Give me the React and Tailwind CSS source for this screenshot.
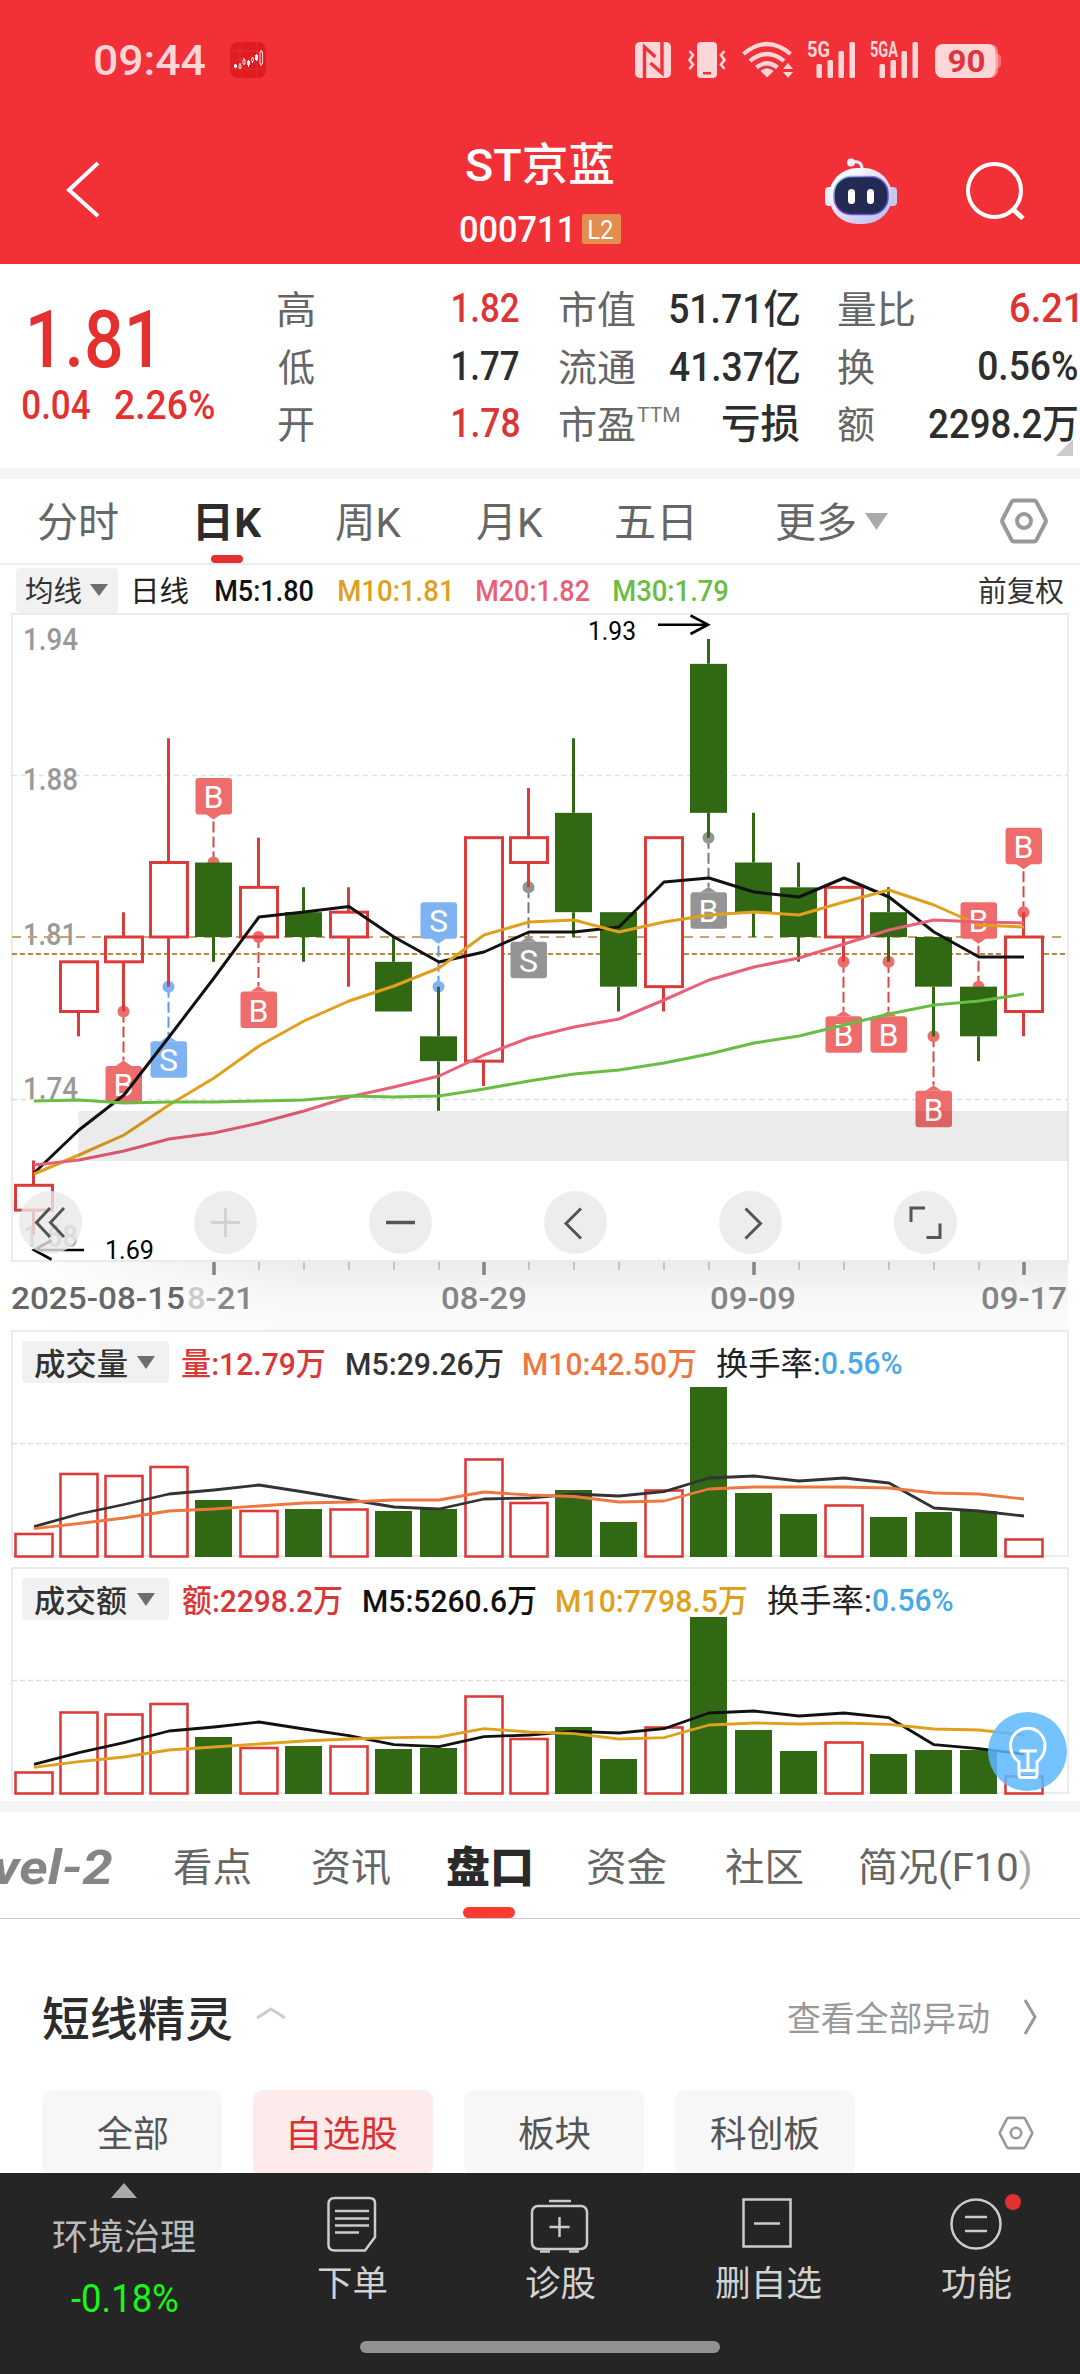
import React, { useLayoutEffect, useRef, useState } from "react";

function T({ w, className = "", children }) {
  const ref = useRef(null);
  const [fit, setFit] = useState(null);
  useLayoutEffect(() => {
    const cs = getComputedStyle(ref.current);
    const ctx = document.createElement("canvas").getContext("2d");
    ctx.font = `${cs.fontStyle} ${cs.fontWeight} ${cs.fontSize} ${cs.fontFamily}`;
    const text = ref.current.textContent;
    const m = ctx.measureText(text);
    const ink = m.actualBoundingBoxLeft + m.actualBoundingBoxRight;
    const s = ink > 0 ? w / ink : 1;
    const dy = /[\u4e00-\u9fff]/.test(text) ? 1.5 : 0.5;
    setFit({ transform: `translate(${m.actualBoundingBoxLeft * s}px, ${dy}px) scaleX(${s})` });
  }, [w]);
  return (
    <span className={`block shrink-0 whitespace-nowrap leading-none ${className}`} style={{ width: w }}>
      <span ref={ref} className="inline-block origin-left" style={fit || undefined}>{children}</span>
    </span>
  );
}

const X = (k) => 33.5 + 45 * k;
const Y = (c) => 937 - 24.83 * (c - 181);
const RED = "#dc3b3b";
const GREEN = "#306813";

// [up, bodyTop, bodyBottom, high, low] in cents
const candles = [
  [1, 171, 170, 172, 169], [1, 180, 178, 180, 177], [1, 181, 180, 182, 178], [1, 184, 181, 189, 179],
  [0, 184, 181, 184, 180], [1, 183, 181, 185, 181], [0, 182, 181, 183, 180], [1, 182, 181, 183, 179],
  [0, 180, 178, 181, 178], [0, 177, 176, 179, 174], [1, 185, 176, 185, 175], [1, 185, 184, 187, 183],
  [0, 186, 182, 189, 181], [0, 182, 179, 182, 178], [1, 185, 179, 185, 178], [0, 192, 186, 193, 185],
  [0, 184, 182, 186, 181], [0, 183, 181, 184, 180], [1, 183, 181, 183, 180], [0, 182, 181, 183, 180],
  [0, 181, 179, 181, 177], [0, 179, 177, 179, 176], [1, 181, 178, 182, 177],
];

// [index, letter, colour, price, above]
const R = "#ee6c6c", B = "#7fb2f2", G = "#949494";
const markers = [
  [2, "B", R, 178, 0], [3, "S", B, 179, 0], [4, "B", R, 184, 1], [5, "B", R, 181, 0], [9, "S", B, 179, 1],
  [11, "S", G, 183, 0], [15, "B", G, 185, 0], [18, "B", R, 180, 0], [19, "B", R, 180, 0], [20, "B", R, 177, 0],
  [21, "B", R, 179, 1], [22, "B", R, 182, 1],
];
const stemColor = { [R]: "#d94848", [B]: "#5f9be6", [G]: "#777" };

const ma5 = [1173, 1130, 1095, 1037, 978, 917, 912, 906.5, 937, 962, 952, 932, 932, 927, 882, 878, 892, 897, 878, 897, 932, 957, 957];
const ma10 = [1174, 1155, 1135, 1105, 1078, 1046, 1021, 1001, 986, 968, 935, 922, 920, 932, 922, 915, 912, 915, 902, 890, 905, 925, 927];
const ma20 = [1165, 1160, 1151, 1139, 1133, 1123, 1111, 1097, 1087, 1076, 1055, 1038, 1027, 1019, 1000, 980, 967, 958, 944, 930, 920, 922, 923];
const ma30 = [1101, 1100, 1103, 1102, 1102, 1101, 1100, 1096, 1097, 1096, 1089, 1081, 1074, 1070, 1063, 1054, 1043, 1036, 1025, 1014, 1005, 1001, 994];

function Line({ ys, color, w = 3 }) {
  return <polyline fill="none" stroke={color} strokeWidth={w} strokeLinejoin="round" points={ys.map((y, k) => `${X(k) + 0.5},${y}`).join(" ")} />;
}

function Marker({ m: [k, letter, color, price, above] }) {
  const x = X(k), d = Y(price);
  const top = above ? d - 84.5 : d + 54.5;
  const tip = above ? d - 43 : d + 49;
  const base = above ? top + 36 : top;
  return (
    <g>
      <path d={`M${x} ${d}V${tip}`} stroke={stemColor[color]} strokeWidth="2" strokeDasharray="11 4" />
      <circle cx={x} cy={d} r="6" fill={color} />
      <rect x={x - 18} y={top} width="36.5" height="36.5" rx="3" fill={color} />
      <path d={`M${x - 8} ${base}L${x} ${tip}L${x + 8} ${base}Z`} fill={color} />
      <text x={x} y={top + 30} fill="#fff" fontSize="32" textAnchor="middle" fontFamily="Roboto, sans-serif">{letter}</text>
    </g>
  );
}

function Label({ x, y, w, children, size = 32, fill = "#999", weight = 500 }) {
  return <text x={x} y={y} fontSize={size} fill={fill} fontWeight={weight} textLength={w} lengthAdjust="spacingAndGlyphs" fontFamily="Roboto, sans-serif">{children}</text>;
}

function PriceChart() {
  return (
    <svg viewBox="0 613 1080 717" className="block h-[717px] w-[1080px]">
      <defs>
        <linearGradient id="shade" x1="0" y1="0" x2="0" y2="1">
          <stop offset="0" stopColor="#ececec" />
          <stop offset="0.5" stopColor="#f7f7f7" />
          <stop offset="1" stopColor="#fbfbfb" />
        </linearGradient>
        <linearGradient id="fade" x1="0" y1="0" x2="1" y2="0">
          <stop offset="0" stopColor="#fff" />
          <stop offset="1" stopColor="#fff" stopOpacity="0" />
        </linearGradient>
      </defs>
      <rect x="12" y="1262" width="1056" height="68" fill="url(#shade)" />
      <rect x="12" y="1262" width="290" height="68" fill="url(#fade)" />
      <rect x="12" y="614" width="1056" height="647" fill="#fff" stroke="#ebebeb" strokeWidth="2" />
      <path d="M12 775.5H1068M12 1099.5H1068" stroke="#e0e0e0" strokeWidth="1.3" strokeDasharray="5 4" />
      <Label x="23" y="650" w="55">1.94</Label>
      <Label x="23" y="790" w="55">1.88</Label>
      <Label x="23" y="945" w="54">1.81</Label>
      <Label x="23" y="1099" w="55">1.74</Label>
      <Label x="23" y="1247" w="55" fill="#aaa">1.68</Label>
      <path d="M12 937H1068" stroke="#c9a36a" strokeWidth="2" strokeDasharray="9 7" />
      <path d="M12 954H1068" stroke="#bd8a45" strokeWidth="2" strokeDasharray="5 3" />
      {markers.map((m) => <Marker key={m[0]} m={m} />)}
      {candles.map(([up, t, b, h, l], k) => {
        const x = X(k), c = up ? RED : GREEN;
        return (
          <g key={k}>
            <path d={`M${x} ${Y(h)}V${Y(t)}M${x} ${Y(b)}V${Y(l)}`} stroke={c} strokeWidth="3" />
            {up ? <rect x={x - 18} y={Y(t)} width="37" height={Y(b) - Y(t)} fill={k === 5 || k === 2 ? "none" : "#fff"} stroke={c} strokeWidth="3" />
              : <rect x={x - 18.5} y={Y(t)} width="37" height={Y(b) - Y(t)} fill={c} />}
          </g>
        );
      })}
      <Line ys={ma5} color="#111" />
      <Line ys={ma10} color="#e0a01c" />
      <Line ys={ma20} color="#e95f78" />
      <Line ys={ma30} color="#69bd43" />
      <rect x="78.5" y="1111" width="989.5" height="50" fill="#000" fillOpacity="0.08" />
      <path d="M658 624.7H708M690.5 615.5L708 624.7L690.5 634" fill="none" stroke="#000" strokeWidth="2.6" />
      <Label x="588" y="640" w="48" size="26" fill="#000" weight="400">1.93</Label>
      <path d="M84 1250H34M51.5 1240.5L34 1250L51.5 1259.5" fill="none" stroke="#000" strokeWidth="2.6" />
      <Label x="105" y="1259" w="49" size="26" fill="#000" weight="400">1.69</Label>
      {Array.from({ length: 19 }, (_, i) => i + 4).map((k) => {
        const major = (k - 4) % 6 === 0;
        return <path key={k} d={`M${X(k) + 0.5} 1262V${major ? 1275 : 1270}`} stroke={major ? "#858585" : "#c4c4c4"} strokeWidth={major ? 3.5 : 2} />;
      })}
      <Label x="11" y="1309" w="174" fill="#666" weight="500">2025-08-15</Label>
      <text x="187" y="1309" fontSize="32" fontWeight="500" fill="#888" textLength="67" lengthAdjust="spacingAndGlyphs" fontFamily="Roboto, sans-serif"><tspan fill="#ccc">8</tspan><tspan fill="#aaa">-</tspan>21</text>
      <Label x="441" y="1309" w="86" fill="#858585">08-29</Label>
      <Label x="710" y="1309" w="86" fill="#858585">09-09</Label>
      <Label x="981" y="1309" w="86" fill="#858585">09-17</Label>
    </svg>
  );
}

const toolIcons = [
  <><path d="M31 17L17.5 31.5L31 46M45 17L31.5 31.5L45 46" /></>,
  <g stroke="#d2d2d2"><path d="M17 31.5H46M31.5 17V46" /></g>,
  <><path d="M17 31.5H46" strokeWidth="3.5" /></>,
  <><path d="M37 17.5L22 32.5L37 47.5" /></>,
  <><path d="M26.5 17.5L41.5 32.5L26.5 47.5" /></>,
  <><path d="M17 31V17H31M46 32.5V46.5H32.5" /></>,
];

const volume = {
  tops: [1534, 1474, 1476, 1467, 1500, 1511, 1509, 1509.5, 1511, 1509, 1459.5, 1503, 1490, 1522, 1490.5, 1387, 1493, 1514, 1505.5, 1517, 1512, 1511, 1539.5],
  m5: [1526.7, 1514, 1504.5, 1494, 1490, 1485, 1492, 1499.5, 1507, 1509, 1499, 1498, 1494, 1496, 1491.7, 1478, 1476, 1481, 1478, 1483, 1508, 1511, 1516],
  m10: [1528.7, 1523.5, 1518, 1511, 1509, 1506, 1503, 1502, 1500, 1500, 1492, 1495, 1496.5, 1502, 1501, 1489, 1487, 1487, 1487, 1488, 1493, 1494, 1499],
};
const amount = {
  tops: [1772.5, 1712.5, 1714.5, 1704, 1737, 1748, 1746, 1746.5, 1749, 1748, 1696.5, 1739, 1727, 1759, 1727.5, 1617, 1730, 1751, 1742.5, 1754, 1750, 1750, 1776.5],
  m5: [1764.3, 1752.7, 1742.7, 1731, 1727, 1722, 1729, 1735.7, 1744.7, 1746.7, 1736.7, 1735, 1731.3, 1733, 1728.7, 1713, 1711, 1716, 1713, 1717.7, 1744.7, 1748.7, 1754],
  m10: [1767.3, 1761.7, 1757, 1750, 1747, 1744, 1741, 1739, 1737.7, 1737, 1728.7, 1732, 1733.7, 1739, 1737.7, 1725, 1723, 1724, 1723, 1724.3, 1729, 1730, 1735],
};

function BarPanel({ data, top, bottom, mid, c5, c10, box, className }) {
  return (
    <svg viewBox={box} className={className}>
      <rect x="12" y={top} width="1056" height={bottom - top - 1} fill="none" stroke="#ebebeb" strokeWidth="2" />
      <path d={`M12 ${mid}H1068`} stroke="#dedede" strokeWidth="1.3" strokeDasharray="5 3" />
      {data.tops.map((t, k) => candles[k][0]
        ? <rect key={k} x={X(k) - 18} y={t} width="37" height={bottom - t - 0.5} fill="#fff" stroke={RED} strokeWidth="2.6" />
        : <rect key={k} x={X(k) - 18.5} y={t} width="37" height={bottom - t} fill={GREEN} />)}
      <Line ys={data.m5} color={c5} w={2.8} />
      <Line ys={data.m10} color={c10} w={2.8} />
    </svg>
  );
}

function Picker({ label }) {
  return (
    <div className="ml-[22px] flex h-[42px] w-[147px] shrink-0 items-center rounded bg-[#f1f1f1]">
      <T w={93} className="ml-3 text-[31px] text-[#333]">{label}</T>
      <svg viewBox="0 0 18 13" className="ml-[10px] h-[13px] w-[18px]"><path d="M0 0H18L9 13Z" fill="#6e6e6e" /></svg>
    </div>
  );
}

function Hex({ size, color, w }) {
  return (
    <svg viewBox="0 0 48 46" className={size} fill="none" stroke={color} strokeWidth={w}>
      <path d="M14 2.5H34Q35.500 2.500 36.300 3.800L45.500 21.500Q46.200 23 45.500 24.500L36.300 42.200Q35.500 43.500 34 43.500H14Q12.500 43.500 11.700 42.200L2.500 24.500Q1.800 23 2.500 21.500L11.700 3.800Q12.500 2.500 14 2.500Z" />
      <circle cx="24" cy="23" r="7" />
    </svg>
  );
}

function StatusIcons() {
  const c = "#ffd6d8";
  return (
    <svg viewBox="635 38 370 44" className="ml-auto mr-[75px] h-[44px] w-[370px]" fill={c}>
      <rect x="635" y="42" width="36" height="36" rx="5" />
      <path d="M644.5 78V47L655.500 57M662 42V73L650.500 63" fill="none" stroke="#f23038" strokeWidth="3.4" />
      <rect x="697" y="42" width="20" height="36" rx="4" />
      <rect x="703" y="72" width="8" height="2.500" fill="#f23038" />
      <path d="M689.500 51L693 55L689.500 60L693 64.500L689.500 69M724.500 51L721 55L724.500 60L721 64.500L724.500 69" fill="none" stroke={c} strokeWidth="2.600" />
      <g fill="none" stroke={c} strokeWidth="4.200">
        <path d="M743.500 54Q767 34 790.500 54" />
        <path d="M750 61Q767 47 784 61" />
        <path d="M756.500 67.500Q767 59 777.500 67.500" />
      </g>
      <path d="M760.500 71Q767 65.500 773.500 71L767 77.500Z" />
      <path d="M783 69L788 63L793 69ZM783 72H793L788 78Z" />
      <text x="807" y="57" fontSize="21.500" fontWeight="700" textLength="23" lengthAdjust="spacingAndGlyphs" fontFamily="Roboto, sans-serif">5G</text>
      <text x="870" y="57" fontSize="21.500" fontWeight="700" textLength="28" lengthAdjust="spacingAndGlyphs" fontFamily="Roboto, sans-serif">5GA</text>
      {[0, 63].map((o) => (
        <g key={o}>
          <rect x={816.500 + o} y="64" width="5.500" height="14" rx="1.500" />
          <rect x={827.500 + o} y="60" width="5.500" height="18" rx="1.500" />
          <rect x={838.500 + o} y="51" width="5.500" height="27" rx="1.500" />
          <rect x={849.500 + o} y="42" width="5.500" height="36" rx="1.500" />
        </g>
      ))}
      <rect x="990" y="54" width="11" height="14" rx="4" opacity="0.400" />
      <rect x="940" y="44" width="58" height="34" rx="8" opacity="0.500" />
      <rect x="935" y="44" width="60.500" height="34" rx="8" />
      <text x="966.500" y="72" fill="#e0353c" fontSize="31" fontWeight="700" textAnchor="middle" textLength="38" lengthAdjust="spacingAndGlyphs" fontFamily="Roboto, sans-serif">90</text>
    </svg>
  );
}

function Header() {
  return (
    <header className="h-[264px] bg-[#f23038] text-white">
      <div className="flex h-[120px] items-center">
        <T w={110} className="ml-[95px] text-[42px] font-medium text-[#ffd6d8]">09:44</T>
        <svg viewBox="0 0 36 36" className="ml-[25px] h-9 w-9">
          <rect width="36" height="36" rx="8" fill="#e01c20" />
          <path d="M0 9H36M0 18H36M0 27H36M10 0V36M27 0V36" stroke="#e83a3a" strokeWidth="0.600" />
          <path d="M5.500 22V26M10 21V27M14 16V23M18.500 18V25M22.500 15V21M26.500 12V19M31 8V24" stroke="#fff" strokeWidth="1" />
          <path d="M4 22.500H7V25.500H4ZM17 19H20V23H17ZM25 13H28V18H25Z" fill="#fff" />
          <path d="M9 23H11V26H9ZM13 18H15V22H13ZM21.500 16H23.500V19H21.500ZM30 10H32.500V22H30Z" fill="#e01c20" stroke="#fff" strokeWidth="0.800" />
        </svg>
        <StatusIcons />
      </div>
      <div className="grid h-[144px] grid-cols-[1fr_auto_1fr]">
        <div className="flex items-center pb-[5px] pl-[65px]">
          <svg viewBox="0 0 36 60" className="h-[60px] w-9" fill="none" stroke="#fff" strokeWidth="4"><path d="M33 3L4 30L33 56" /></svg>
        </div>
        <div className="flex flex-col items-center pt-5">
          <div className="flex h-[46px] items-center"><T w={148} className="text-[45px] font-medium">ST京蓝</T></div>
          <div className="mt-[26px] flex h-[34px] items-center gap-3">
            <T w={110} className="text-[36px] font-medium">000711</T>
            <div className="flex h-[30px] w-[39px] items-center justify-center rounded-[2px] bg-[#e38e4c]"><T w={24} className="text-[26px]">L2</T></div>
          </div>
        </div>
        <div className="flex items-center justify-end pb-[3px] pr-[54px]">
          <svg viewBox="0 0 72 66" className="h-[66px] w-[72px]">
            <defs>
              <linearGradient id="head" x1="0" y1="0" x2="1" y2="1"><stop offset="0.200" stopColor="#fbfaff" /><stop offset="1" stopColor="#b9b4e8" /></linearGradient>
              <linearGradient id="rim" x1="0" y1="0" x2="1" y2="1"><stop offset="0" stopColor="#8fe3f5" /><stop offset="0.500" stopColor="#8a4be0" /><stop offset="1" stopColor="#4a55e0" /></linearGradient>
            </defs>
            <path d="M27 4Q37 2 37 11" fill="none" stroke="#e8e8f4" strokeWidth="3" />
            <circle cx="26" cy="4.500" r="4" fill="#eceef8" />
            <rect x="0" y="29" width="12" height="19" rx="4" fill="#eceafa" />
            <rect x="60" y="29" width="12" height="19" rx="4" fill="#c9c6f0" />
            <rect x="4" y="10" width="63" height="56" rx="28" fill="url(#head)" />
            <rect x="9" y="18.500" width="54" height="38" rx="17" fill="#242b52" stroke="url(#rim)" strokeWidth="1.500" />
            <rect x="23" y="31" width="7" height="15" rx="3.500" fill="#fff" />
            <rect x="42" y="31" width="7" height="15" rx="3.500" fill="#fff" />
          </svg>
          <svg viewBox="0 0 62 62" className="ml-[67px] h-[62px] w-[62px]" fill="none" stroke="#fff" strokeWidth="4"><circle cx="30.500" cy="30.500" r="26.500" /><path d="M48.500 49L59 58.500" strokeWidth="5" /></svg>
        </div>
      </div>
    </header>
  );
}

function Stat({ label, lw, value, vw, red, sup }) {
  return (
    <div className="flex items-center justify-between">
      <div className="flex">
        <T w={lw} className="text-[38px] text-[#666]">{label}</T>
        {sup && <T w={42} className="ml-0.5 text-[20px] text-[#777]">{sup}</T>}
      </div>
      <T w={vw} className={red ? "text-[40px] font-medium text-[#dd3434]" : "text-[40px] font-medium text-[#2d2d2d]"}>{value}</T>
    </div>
  );
}

function Quote() {
  return (
    <section className="relative flex h-[204px]">
      <div className="w-[278px] pt-[35px] text-[#e53030]">
        <div className="flex h-20 items-center"><T w={120} className="ml-[30px] text-[80px] font-medium">1.81</T></div>
        <div className="mt-[6px] flex h-10 items-center">
          <T w={67} className="ml-[23px] text-[40px] font-medium">0.04</T>
          <T w={99} className="ml-[25px] text-[40px] font-medium">2.26%</T>
        </div>
      </div>
      <div className="grid h-[188px] grid-cols-[241px_240px_239px] grid-rows-[57px_58px_57px] gap-x-[39.500px] pt-[15.500px]">
        <Stat label="高" lw={36} value="1.82" vw={66} red />
        <Stat label="市值" lw={76} value="51.71亿" vw={129} />
        <Stat label="量比" lw={76} value="6.21" vw={66} red />
        <Stat label="低" lw={36} value="1.77" vw={66} />
        <Stat label="流通" lw={76} value="41.37亿" vw={129} />
        <Stat label="换" lw={36} value="0.56%" vw={98} />
        <Stat label="开" lw={36} value="1.78" vw={66} red />
        <Stat label="市盈" lw={76} value="亏损" vw={77} sup="TTM" />
        <Stat label="额" lw={36} value="2298.2万" vw={148} />
      </div>
      <svg viewBox="0 0 17 17" className="absolute bottom-3 right-[7px] h-[17px] w-[17px]"><path d="M17 0V17H0Z" fill="#ccc" /></svg>
    </section>
  );
}

function PeriodTabs() {
  return (
    <nav className="flex h-[86px] items-center border-b-2 border-[#ebebeb] text-[41px] text-[#666]">
      <T w={80} className="ml-[38px]">分时</T>
      <div className="relative ml-20 flex h-full items-center text-[#2c2c2c]">
        <T w={64} className="font-bold">日K</T>
        <div className="absolute bottom-0 left-[13px] h-2 w-8 rounded-full bg-[#e53030]" />
      </div>
      <T w={65} className="ml-[74px]">周K</T>
      <T w={66} className="ml-[76px]">月K</T>
      <T w={76} className="ml-[73px]">五日</T>
      <T w={79} className="ml-[84px]">更多</T>
      <svg viewBox="0 0 23 17" className="ml-[10px] h-[17px] w-[23px]"><path d="M0 0H23L11.500 17Z" fill="#aaa" /></svg>
      <Hex size="ml-[112px] h-[46px] w-12" color="#999" w="4" />
    </nav>
  );
}

function MaRow() {
  return (
    <div className="flex h-12 items-center pt-[2px] text-[30px] font-medium">
      <div className="ml-4 flex h-[45px] w-[102px] items-center rounded bg-[#f1f1f1]">
        <T w={55} className="ml-[10px] text-[29px] font-normal text-[#333]">均线</T>
        <svg viewBox="0 0 18 12" className="ml-[9px] h-3 w-[18px]"><path d="M0 0H18L9 12Z" fill="#6e6e6e" /></svg>
      </div>
      <T w={53} className="ml-[17px] text-[29px] font-normal text-[#222]">日线</T>
      <T w={97} className="ml-[28px] text-[#111]">M5:1.80</T>
      <T w={111} className="ml-[26px] text-[#e0a01c]">M10:1.81</T>
      <T w={112} className="ml-[27px] text-[#e95f78]">M20:1.82</T>
      <T w={114} className="ml-[25px] text-[#69bd43]">M30:1.79</T>
      <T w={85} className="ml-[251px] text-[29px] font-normal text-[#333]">前复权</T>
    </div>
  );
}

function Charts() {
  return (
    <>
      <div className="relative">
        <PriceChart />
        <div className="absolute left-[19px] top-[577.500px] flex gap-[112px]">
          {toolIcons.map((icon, i) => (
            <div key={i} className="h-[63px] w-[63px] rounded-full bg-[#e8e8e8]/80">
              <svg viewBox="0 0 63 63" className="h-[63px] w-[63px]" fill="none" stroke="#555" strokeWidth="3">{icon}</svg>
            </div>
          ))}
        </div>
      </div>
      <div className="relative h-[237px] pt-[11px]">
        <BarPanel data={volume} top={1331} bottom={1557} mid={1443.500} c5="#333" c10="#ee7740" box="0 1330 1080 237" className="absolute inset-0 h-[237px] w-[1080px]" />
        <div className="relative flex h-[42px] items-center text-[32px] font-medium">
          <Picker label="成交量" />
          <T w={143} className="ml-[12.500px] text-[#dc3737]">量:12.79万</T>
          <T w={156} className="ml-[22px] text-[#333]">M5:29.26万</T>
          <T w={172} className="ml-[21px] text-[#ee7740]">M10:42.50万</T>
          <T w={102} className="ml-[21px] font-normal text-[#222]">换手率:</T>
          <T w={80} className="ml-[3px] text-[#48a9e6]">0.56%</T>
        </div>
      </div>
      <div className="relative h-[234px] pt-[11px]">
        <BarPanel data={amount} top={1568} bottom={1794} mid={1680.500} c5="#111" c10="#e0a01c" box="0 1567 1080 234" className="absolute inset-0 h-[234px] w-[1080px]" />
        <div className="relative flex h-[42px] items-center text-[32px] font-medium">
          <Picker label="成交额" />
          <T w={160} className="ml-[12.500px] text-[#dc3737]">额:2298.2万</T>
          <T w={172} className="ml-[22px] text-[#111]">M5:5260.6万</T>
          <T w={190} className="ml-[21.500px] text-[#e0a01c]">M10:7798.5万</T>
          <T w={102} className="ml-[21px] font-normal text-[#222]">换手率:</T>
          <T w={80} className="ml-[3px] text-[#48a9e6]">0.56%</T>
        </div>
        <div className="absolute right-[13px] top-[145px] h-[79px] w-[79px] rounded-full bg-[#5cb9ff]/85">
          <svg viewBox="0 0 79 79" className="h-[79px] w-[79px]" fill="none" stroke="#fff" strokeWidth="3" strokeLinejoin="round">
            <path d="M31 50Q22.500 43.500 22.500 33.500A17 17 0 0 1 57 33.500Q57 43.500 49 50V63Q49 65.500 46.500 65.500H33.500Q31 65.500 31 63Z" />
            <path d="M31 58.500H49M31.500 39H49M40 39V58" />
          </svg>
        </div>
      </div>
    </>
  );
}

function InfoTabs() {
  return (
    <nav className="flex h-[107px] items-center overflow-hidden border-b border-[#c9c9c9] pt-[3px] text-[39px] text-[#666]">
      <T w={117} className="-ml-[5px] text-[48px] font-bold italic text-[#858585]">vel-2</T>
      <T w={77} className="ml-[62px]">看点</T>
      <T w={78} className="ml-[61px]">资讯</T>
      <div className="relative ml-[57px] flex h-full items-center text-[#2a2a2a]">
        <T w={83} className="text-[43px] font-black">盘口</T>
        <div className="absolute bottom-0 left-4 h-[11px] w-[52px] rounded-full bg-[#fb3a30]" />
      </div>
      <T w={79} className="ml-[57px]">资金</T>
      <T w={77} className="ml-[60px]">社区</T>
      <T w={171} className="ml-[56px]">简况(F10<span className="text-[#a8a8a8]">)</span></T>
    </nav>
  );
}

function Shortline() {
  const chip = "flex h-[86px] w-[180px] items-center justify-center rounded-[10px] text-[36px]";
  return (
    <section>
      <div className="flex h-[171px] items-center pt-[25px]">
        <T w={189} className="ml-[43px] text-[47px] font-medium text-[#2c2c2c]">短线精灵</T>
        <svg viewBox="0 0 30 12" className="ml-6 mt-[-8px] h-3 w-[30px]" fill="none" stroke="#ccc" strokeWidth="3"><path d="M1 11L15 2L29 11" /></svg>
        <T w={201} className="ml-auto text-[34px] text-[#999]">查看全部异动</T>
        <svg viewBox="0 0 14 36" className="ml-[35px] mr-[42px] h-9 w-[14px]" fill="none" stroke="#999" strokeWidth="3"><path d="M1 1L11 18L1 35" /></svg>
      </div>
      <div className="flex h-[83px] gap-[31px] overflow-hidden pl-[42px]">
        <div className={`${chip} bg-[#f7f7f7] text-[#555]`}><T w={71}>全部</T></div>
        <div className={`${chip} bg-[#fdeaea] text-[#dc3030]`}><T w={107}>自选股</T></div>
        <div className={`${chip} bg-[#f7f7f7] text-[#555]`}><T w={71}>板块</T></div>
        <div className={`${chip} bg-[#f7f7f7] text-[#555]`}><T w={108}>科创板</T></div>
        <Hex size="ml-[112px] mt-[26px] h-[34px] w-[36px] shrink-0" color="#999" w="3.500" />
      </div>
    </section>
  );
}

const actions = [
  { label: "下单", w: 69, icon: <><path d="M13 5H47Q53 5 53 10V44L43 57.500H13Q6.500 57.500 6.500 52V11Q6.500 5 13 5Z" /><path d="M13 18H47M13 25.500H47M13 32.500H47M13 39.500H37" /></> },
  { label: "诊股", w: 69, icon: <><rect x="2" y="13" width="55" height="43" rx="6" /><path d="M19 8H41M29.500 24V44M19.500 34H39.500M10 58.500H20M39 58.500H49" /></> },
  { label: "删自选", w: 105, icon: <><rect x="5.500" y="6.500" width="47" height="47" /><path d="M16 30.500H42" /></> },
  { label: "功能", w: 69, dot: true, icon: <><circle cx="30" cy="31" r="24.500" /><path d="M19 24H41M19 38H41" /></> },
];

function BottomBar() {
  return (
    <footer className="relative flex h-[201px] bg-[#252525]">
      <div className="flex w-[248px] flex-col items-center pt-[10px]">
        <svg viewBox="0 0 26 15" className="h-[15px] w-[26px]"><path d="M13 0L26 15H0Z" fill="#aaa" /></svg>
        <div className="mt-[18px] flex h-10 items-center"><T w={142} className="text-[36px] text-[#bbb]">环境治理</T></div>
        <div className="mt-[22px] flex h-10 items-center"><T w={107} className="text-[38px] text-[#18f818]">-0.18%</T></div>
      </div>
      {actions.map((a) => (
        <div key={a.label} className="flex w-[208px] flex-col items-center pt-5">
          <div className="relative">
            <svg viewBox="0 0 60 60" className="h-[60px] w-[60px]" fill="none" stroke="#ccc" strokeWidth="2.500">{a.icon}</svg>
            {a.dot && <div className="absolute -right-[15px] top-[1px] h-4 w-4 rounded-full bg-[#e53030]" />}
          </div>
          <div className="mt-[9px] flex h-10 items-center"><T w={a.w} className="text-[35px] text-[#d2d2d2]">{a.label}</T></div>
        </div>
      ))}
      <div className="absolute bottom-[21px] left-[360px] h-3 w-[360px] rounded-full bg-[#929292]" />
    </footer>
  );
}

export default function App() {
  return (
    <div className="h-[2374px] w-[1080px] overflow-hidden bg-white font-['Roboto','Noto_Sans_CJK_SC',sans-serif]">
      <Header />
      <Quote />
      <div className="h-[11px] bg-[#f4f4f4]" />
      <PeriodTabs />
      <MaRow />
      <Charts />
      <div className="h-[11px] bg-[#f4f4f4]" />
      <InfoTabs />
      <Shortline />
      <BottomBar />
    </div>
  );
}
